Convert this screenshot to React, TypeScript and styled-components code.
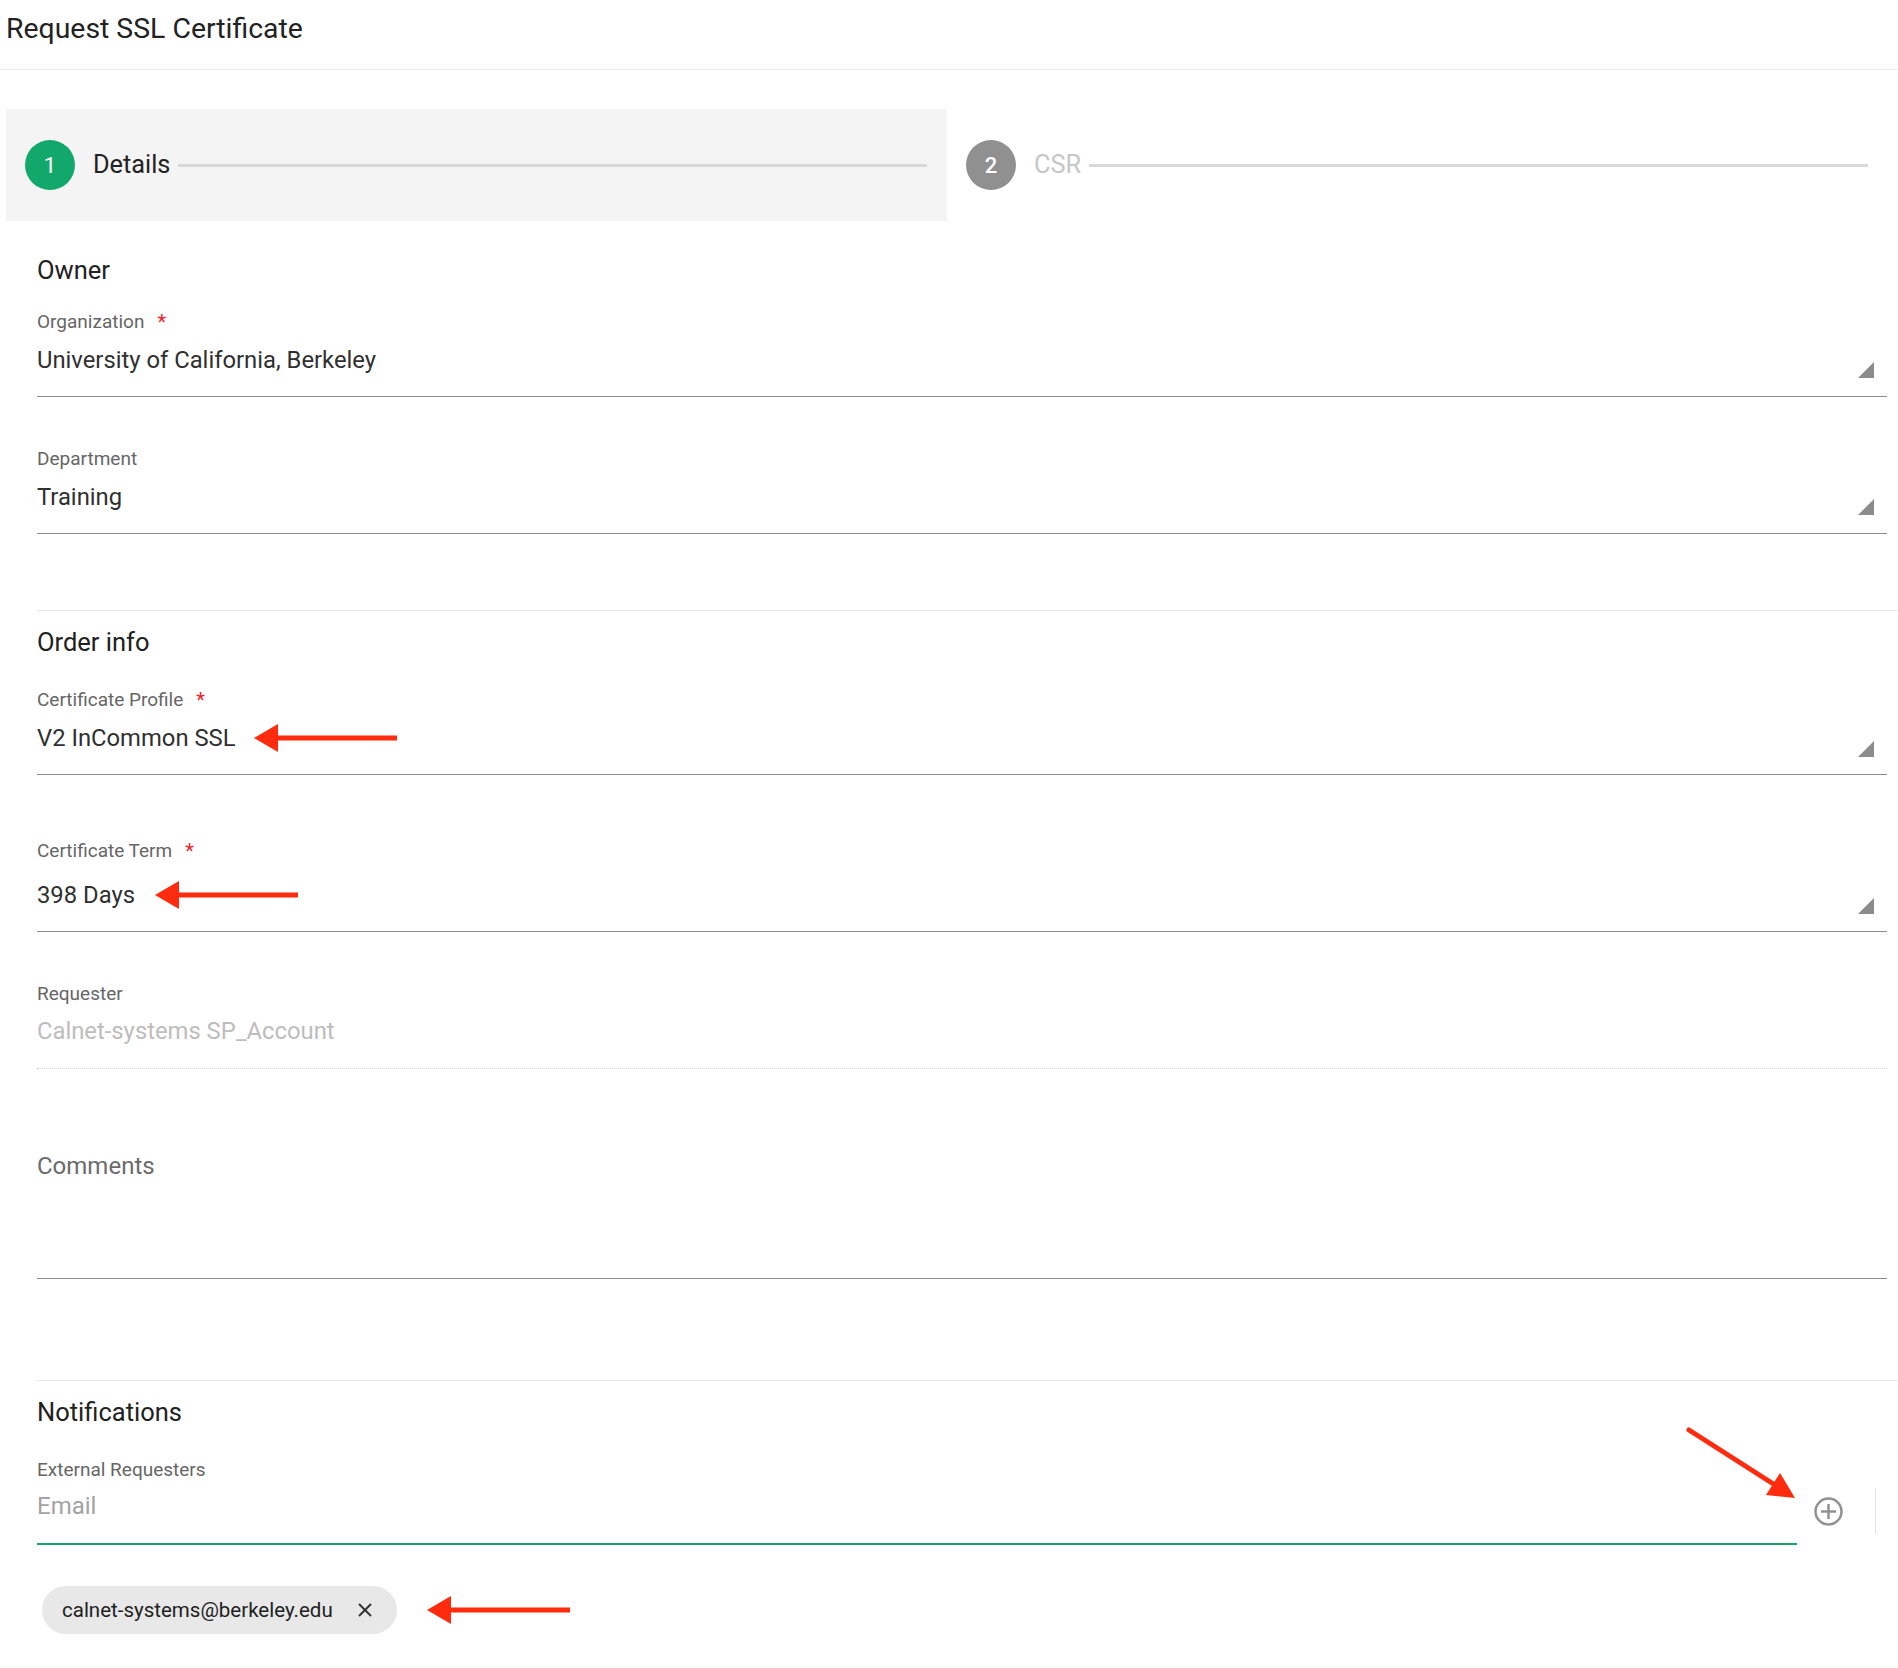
import React from "react";
import styled, { createGlobalStyle } from "styled-components";

const GlobalStyle = createGlobalStyle`
  html, body {
    margin: 0;
    padding: 0;
    background: #ffffff;
  }
  body {
    font-family: Roboto, "Liberation Sans", Arial, sans-serif;
    color: #333;
  }
  * {
    box-sizing: border-box;
  }
`;

const RED = "#fe2b0f";
const GREEN = "#12a86b";

function LeftArrow({ width = 144 }: { width?: number }) {
  return (
    <ArrowSvg width={width} height={30} viewBox={`0 0 ${width} 30`}>
      <line x1={20} y1={15} x2={width - 1} y2={15} stroke={RED} strokeWidth={5} />
      <polygon points="0,15 24,1 24,29" fill={RED} />
    </ArrowSvg>
  );
}

function DiagonalArrow() {
  return (
    <DiagonalSvg width={115} height={78} viewBox="0 0 115 78">
      <line x1={4} y1={5} x2={90} y2={60} stroke={RED} strokeWidth={5} strokeLinecap="round" />
      <polygon points="110,73 81,70 95,48" fill={RED} />
    </DiagonalSvg>
  );
}

function Caret() {
  return <CaretShape aria-hidden />;
}

function Field({
  label,
  required,
  value,
  muted,
  dotted,
  mt = 0,
  gap = 13,
  pb = 22,
  arrow,
}: {
  label: string;
  required?: boolean;
  value: string;
  muted?: boolean;
  dotted?: boolean;
  mt?: number;
  gap?: number;
  pb?: number;
  arrow?: number;
}) {
  return (
    <FieldBlock $mt={mt}>
      <Label>
        {label}
        {required && <Required>*</Required>}
      </Label>
      <SelectBox $gap={gap} $pb={pb} $dotted={dotted}>
        <Value $muted={muted}>{value}</Value>
        {arrow !== undefined && (
          <InlineArrow $ml={arrow}>
            <LeftArrow />
          </InlineArrow>
        )}
        {!muted && <Caret />}
      </SelectBox>
    </FieldBlock>
  );
}

export default function App() {
  return (
    <Page>
      <GlobalStyle />
      <Header>
        <Title>Request SSL Certificate</Title>
      </Header>

      <Stepper>
        <Step $active>
          <StepCircle $active>1</StepCircle>
          <StepLabel $active>Details</StepLabel>
          <StepLine />
        </Step>
        <Step>
          <StepCircle>2</StepCircle>
          <StepLabel>CSR</StepLabel>
          <StepLine />
        </Step>
      </Stepper>

      <Form>
        <Section $first $pb={76}>
          <Heading $gap={26}>Owner</Heading>
          <Field label="Organization" required value="University of California, Berkeley" />
          <Field label="Department" value="Training" mt={51} />
        </Section>

        <Section $pb={101}>
          <Heading>Order info</Heading>
          <Field label="Certificate Profile" required value="V2 InCommon SSL" gap={12} pb={21} arrow={18} />
          <Field label="Certificate Term" required value="398 Days" mt={65} gap={18} pb={21} arrow={20} />
          <Field label="Requester" value="Calnet-systems SP_Account" muted dotted mt={51} gap={12} pb={23} />
          <CommentsArea placeholder="Comments" />
        </Section>

        <Section $pb={30}>
          <Heading>Notifications</Heading>
          <EmailRow>
            <EmailField>
              <Label>External Requesters</Label>
              <EmailInput placeholder="Email" />
            </EmailField>
            <AddButton aria-label="Add">
              <svg width={29} height={29} viewBox="0 0 29 29">
                <circle cx={14.5} cy={14.5} r={13} fill="none" stroke="#929292" strokeWidth={2.5} />
                <line x1={7} y1={14.5} x2={22} y2={14.5} stroke="#929292" strokeWidth={2.5} />
                <line x1={14.5} y1={7} x2={14.5} y2={22} stroke="#929292" strokeWidth={2.5} />
              </svg>
            </AddButton>
            <Separator />
            <DiagonalArrow />
          </EmailRow>
          <ChipRow>
            <Chip>
              calnet-systems@berkeley.edu
              <ChipClose aria-label="Remove">
                <svg width={14} height={14} viewBox="0 0 14 14">
                  <line x1={1} y1={1} x2={13} y2={13} stroke="#333" strokeWidth={2} />
                  <line x1={13} y1={1} x2={1} y2={13} stroke="#333" strokeWidth={2} />
                </svg>
              </ChipClose>
            </Chip>
            <InlineArrow $ml={30}>
              <LeftArrow />
            </InlineArrow>
          </ChipRow>
        </Section>
      </Form>
    </Page>
  );
}

const Page = styled.div`
  width: 1898px;
  min-height: 1668px;
  background: #fff;
`;

const Header = styled.header`
  height: 70px;
  padding: 12px 0 0 6px;
  border-bottom: 1px solid #ececec;
`;

const Title = styled.h1`
  margin: 0;
  font-size: 28.4px;
  line-height: 34px;
  font-weight: 400;
  color: #222;
`;

const Stepper = styled.div`
  display: grid;
  grid-template-columns: 1fr 1fr;
  width: 1882px;
  height: 112px;
  margin: 39px 0 0 6px;
`;

const Step = styled.div<{ $active?: boolean }>`
  display: flex;
  align-items: center;
  padding: 0 20px 0 19px;
  background: ${(p) => (p.$active ? "#f4f4f4" : "transparent")};
`;

const StepCircle = styled.div<{ $active?: boolean }>`
  flex-shrink: 0;
  width: 50px;
  height: 50px;
  border-radius: 50%;
  display: flex;
  align-items: center;
  justify-content: center;
  background: ${(p) => (p.$active ? GREEN : "#909090")};
  color: #fff;
  font-size: 22px;
  font-weight: ${(p) => (p.$active ? 400 : 500)};
`;

const StepLabel = styled.span<{ $active?: boolean }>`
  margin-left: 18px;
  font-size: 25.3px;
  line-height: 30px;
  color: ${(p) => (p.$active ? "#222" : "#c6c6c6")};
`;

const StepLine = styled.div`
  flex: 1;
  height: 3px;
  margin-left: 8px;
  background: #d9d9d9;
`;

const Form = styled.main`
  margin-left: 37px;
  width: 1861px;
`;

const Section = styled.section<{ $first?: boolean; $pb: number }>`
  padding: ${(p) => (p.$first ? 34 : 16)}px 11px ${(p) => p.$pb}px 0;
  border-top: ${(p) => (p.$first ? "none" : "1px solid #e8e8e8")};
`;

const Heading = styled.h2<{ $gap?: number }>`
  margin: 0 0 ${(p) => p.$gap ?? 32}px;
  font-size: 25.5px;
  line-height: 30px;
  font-weight: 400;
  color: #212121;
`;

const FieldBlock = styled.div<{ $mt: number }>`
  display: flex;
  flex-direction: column;
  margin-top: ${(p) => p.$mt}px;
`;

const Label = styled.label`
  display: flex;
  align-items: center;
  font-size: 19px;
  line-height: 22px;
  color: #666;
`;

const Required = styled.span`
  margin-left: 13px;
  font-size: 20px;
  color: #f5222d;
`;

const SelectBox = styled.div<{ $gap: number; $pb: number; $dotted?: boolean }>`
  display: flex;
  align-items: center;
  margin-top: ${(p) => p.$gap}px;
  padding-bottom: ${(p) => p.$pb}px;
  border-bottom: 1px ${(p) => (p.$dotted ? "dotted #d2d2d2" : "solid #8c8c8c")};
`;

const Value = styled.span<{ $muted?: boolean }>`
  font-size: 23.8px;
  line-height: 28px;
  color: ${(p) => (p.$muted ? "#bdbdbd" : "#303030")};
  white-space: nowrap;
`;

const CaretShape = styled.span`
  align-self: flex-end;
  margin: 0 13px -4px auto;
  width: 0;
  height: 0;
  border-left: 16px solid transparent;
  border-bottom: 16px solid #8c8c8c;
`;

const InlineArrow = styled.span<{ $ml: number }>`
  display: flex;
  margin-left: ${(p) => p.$ml}px;
`;

const ArrowSvg = styled.svg`
  display: block;
`;

const DiagonalSvg = styled.svg`
  position: absolute;
  right: 87px;
  top: -34px;
`;

const CommentsArea = styled.textarea`
  display: block;
  width: 100%;
  height: 127px;
  margin-top: 83px;
  padding: 0;
  border: none;
  border-bottom: 1px solid #8c8c8c;
  resize: none;
  outline: none;
  font-family: inherit;
  font-size: 24px;
  line-height: 28px;
  color: #333;

  &::placeholder {
    color: #6b6b6b;
  }
`;

const EmailRow = styled.div`
  position: relative;
  display: flex;
  align-items: flex-end;
`;

const EmailField = styled.div`
  flex: 1;
  display: flex;
  flex-direction: column;
`;

const EmailInput = styled.input`
  height: 53px;
  margin-top: 11px;
  padding: 0 0 23px;
  border: none;
  border-bottom: 2px solid ${GREEN};
  outline: none;
  font-family: inherit;
  font-size: 24px;
  line-height: 28px;
  color: #333;
  background: transparent;

  &::placeholder {
    color: #a3a3a3;
  }
`;

const AddButton = styled.button`
  display: flex;
  width: 29px;
  height: 29px;
  margin: 0 0 19px 17px;
  padding: 0;
  border: none;
  background: none;
  cursor: pointer;
`;

const Separator = styled.div`
  width: 1px;
  height: 46px;
  margin: 0 11px 11px 32px;
  background: #e3e3e3;
`;

const ChipRow = styled.div`
  display: flex;
  align-items: center;
  margin-top: 41px;
`;

const Chip = styled.div`
  display: inline-flex;
  align-items: center;
  gap: 25px;
  height: 48px;
  margin-left: 5px;
  padding: 0 25px 0 20px;
  border-radius: 24px;
  background: #e8e8e8;
  font-size: 20.5px;
  color: #222;
`;

const ChipClose = styled.button`
  display: flex;
  padding: 0;
  border: none;
  background: none;
  cursor: pointer;
`;
